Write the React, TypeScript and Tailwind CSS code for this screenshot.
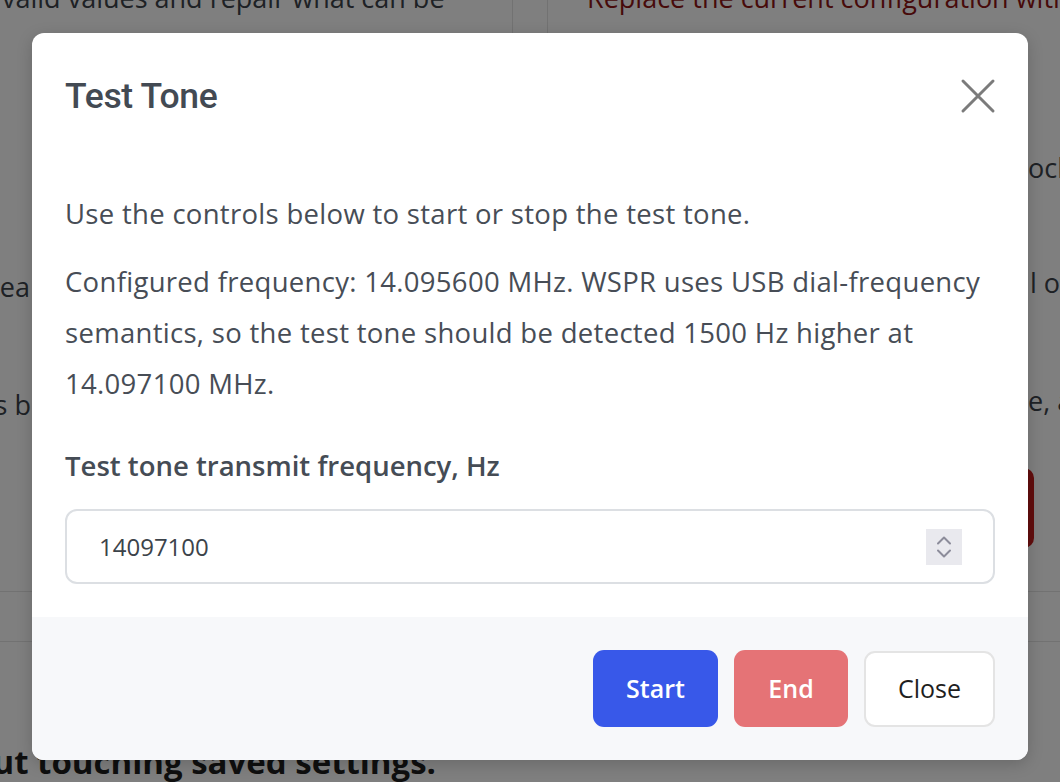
import React from "react";

function CloseIcon() {
  return (
    <svg width="36" height="36" viewBox="0 0 36 36" fill="none" stroke="#7b7b7b" strokeWidth="3" strokeLinecap="round">
      <path d="M3 3 L33 33 M33 3 L3 33" />
    </svg>
  );
}

function Spinner() {
  return (
    <div className="flex h-[36px] w-[36px] flex-col items-center justify-center gap-[4px] bg-[#e9e9ee]">
      <svg width="16" height="9" viewBox="0 0 16 9" fill="none" stroke="#8c8c9a" strokeWidth="2" strokeLinecap="round" strokeLinejoin="round">
        <path d="M2 7.5 L8 1.5 L14 7.5" />
      </svg>
      <svg width="16" height="9" viewBox="0 0 16 9" fill="none" stroke="#8c8c9a" strokeWidth="2" strokeLinecap="round" strokeLinejoin="round">
        <path d="M2 1.5 L8 7.5 L14 1.5" />
      </svg>
    </div>
  );
}

export default function App() {
  return (
    <div className="relative h-[782px] w-[1060px] overflow-hidden bg-white font-['Open_Sans',sans-serif]">
      {/* background page */}
      <div className="flex h-full w-full flex-col">
        <div className="flex h-[597px] w-full">
          <div className="flex w-[513px] shrink-0 flex-col overflow-hidden border-r border-[#e5e5e5] text-[27px] text-[#3c434a]">
            <div className="-mt-[22px] h-[40px] whitespace-nowrap pl-[2px] leading-[40px]">
              valid values and repair what can be
            </div>
            <div className="mt-[249px] flex h-[40px] w-[30px] justify-end whitespace-nowrap leading-[40px]">
              <span>Apply to the ea</span>
            </div>
            <div className="mt-[78px] flex h-[40px] w-[31px] justify-end whitespace-nowrap leading-[40px]">
              <span>Settings is b</span>
            </div>
          </div>
          <div className="ml-[34px] flex min-w-0 flex-1 flex-col overflow-hidden border-l border-[#e5e5e5] text-[27px] text-[#3c434a]">
            <div className="-mt-[22px] h-[40px] whitespace-nowrap pl-[39px] leading-[40px] text-[#8f1414]">
              Replace the current configuration with
            </div>
            <div className="mt-[20px] h-[40px] whitespace-nowrap pl-[40px] leading-[40px]">
              a default sample, or load one h
            </div>
            <div className="mt-[70px] flex h-[40px] justify-end whitespace-nowrap leading-[40px]">
              <span className="w-[32px] overflow-hidden">ock</span>
            </div>
            <div className="mt-[75px] flex h-[40px] justify-end whitespace-nowrap leading-[40px]">
              <span className="w-[30px] overflow-hidden">l of</span>
            </div>
            <div className="mt-[78px] flex h-[40px] justify-end whitespace-nowrap leading-[40px]">
              <span className="w-[32px] overflow-hidden">e, a</span>
            </div>
            <div className="mt-[47px] flex justify-end">
              <div className="mr-[26px] h-[80px] w-[120px] rounded-[10px] bg-[#c41a1a]" />
            </div>
          </div>
        </div>
        <div className="h-[51px] w-full border-y border-[#e5e5e5]" />
        <div className="mt-[100px] flex w-[436px] justify-end whitespace-nowrap text-[33px] font-bold leading-[40px] text-[#1e1e1e]">
          <span>Test without touching saved settings.</span>
        </div>
      </div>

      {/* overlay */}
      <div className="absolute inset-0 bg-black/50" />

      {/* modal */}
      <div className="absolute left-[32px] top-[33px] flex w-[996px] flex-col overflow-hidden rounded-[12px] bg-white shadow-[0_4px_16px_rgba(0,0,0,0.18)]">
        <div className="flex h-[126px] items-center justify-between pl-[33px] pr-[30px]">
          <h2 className="font-[Roboto,sans-serif] text-[35.5px] font-medium leading-[40px] tracking-[-0.3px] text-[#434a53]">Test Tone</h2>
          <button className="flex h-[40px] w-[40px] items-center justify-center">
            <CloseIcon />
          </button>
        </div>
        <div className="flex flex-col px-[33px] pt-[29px] pb-[33px] text-[27.5px] tracking-[0.3px] text-[#474d56]">
          <p className="leading-[51px]">Use the controls below to start or stop the test tone.</p>
          <p className="mt-[17px] leading-[51px]">
            Configured frequency: 14.095600 MHz. WSPR uses USB dial-frequency semantics, so the test tone should be detected 1500 Hz higher at 14.097100 MHz.
          </p>
          <label className="mt-[37px] text-[27.5px] font-semibold leading-[40px] tracking-normal text-[#454c55]">
            Test tone transmit frequency, Hz
          </label>
          <div className="mt-[23px] flex h-[75px] items-center justify-between rounded-[12px] border-2 border-[#dcdfe3] pl-[32px] pr-[31px]">
            <span className="text-[24px] tracking-normal text-[#3c434a]">14097100</span>
            <Spinner />
          </div>
        </div>
        <div className="flex h-[143px] items-center justify-end gap-[16px] bg-[#f7f8fa] px-[33px]">
          <button className="h-[77px] w-[125px] rounded-[11px] bg-[#3858e9] text-[25px] font-semibold text-white">Start</button>
          <button className="h-[77px] w-[114px] rounded-[11px] bg-[#e57376] text-[25px] font-semibold text-white">End</button>
          <button className="h-[76px] w-[131px] rounded-[11px] border-2 border-[#e4e4e4] bg-white text-[25px] font-medium text-[#1e1e1e]">Close</button>
        </div>
      </div>
    </div>
  );
}
